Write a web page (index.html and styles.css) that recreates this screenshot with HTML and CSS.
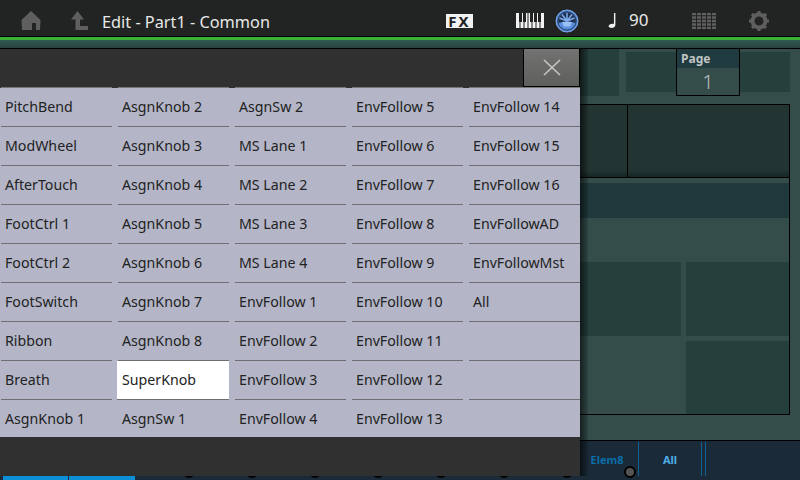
FILE: index.html
```html
<!DOCTYPE html>
<html lang="en">
<head>
    <meta charset="UTF-8">
    <title>Edit - Part1 - Common</title>
    <link rel="stylesheet" href="styles.css">
</head>
<body>
<div class="screen">
    <header class="topbar">
        <svg class="icon-home" width="20" height="20" viewBox="0 0 20 20"><path d="M10 0 L19.500 9 L19 19 L15 19 L15 12 L11 12 L11 19 L1 19 L0.500 9 Z" fill="#5e5f5e"/></svg>
        <svg class="icon-up" width="18" height="20" viewBox="0 0 18 20"><path d="M6.500 0 L13 8.500 L9 8.500 L9 15 L17 15 L17 19 L4.500 19 L4.500 8.500 L0 8.500 Z" fill="#5e5f5e"/></svg>
        <div class="title">Edit - Part1 - Common</div>
        <div class="fx">FX</div>
        <svg class="icon-keys" width="28" height="15" viewBox="0 0 28 15">
            <rect width="28" height="15" fill="#f2f2f2"/>
            <path d="M4 0V15M8 0V15M12 0V15M16 0V15M20 0V15M24 0V15" stroke="#222" stroke-width="1"/>
            <path d="M3 0H6V9H3ZM7 0H10V9H7ZM14 0H17V9H14ZM18 0H21V9H18ZM22 0H25V9H22Z" fill="#222"/>
        </svg>
        <svg class="icon-midi" width="24" height="24" viewBox="0 0 24 24">
            <circle cx="12" cy="12" r="11" fill="#5a8ede" stroke="#7aa6e8" stroke-width="1"/>
            <circle cx="12" cy="12" r="9.200" fill="none" stroke="#1f3353" stroke-width="1"/>
            <path d="M12 12 L3.500 14 A8.700 8.700 0 1 1 20.500 14 Z" fill="#1f3353"/>
            <path d="M12 12 L12 4 M12 12 L7 5.500 M12 12 L17 5.500 M12 12 L4.500 9 M12 12 L19.500 9" stroke="#7fabeb" stroke-width="1.500"/>
            <path d="M7 13 L17 13 L15 17.500 H9 Z" fill="#9cc0f3"/>
        </svg>
        <svg class="icon-note" width="8" height="15" viewBox="1 0 8 15.500"><path d="M7 0H8.500V12.500C8.500 14.500 6.500 15.500 4.500 15.500C2.500 15.500 1.500 14.500 1.500 13.500C1.500 12 3.500 11 5.500 11C6 11 6.500 11 7 11.300Z" fill="#f0f0f0"/></svg>
        <div class="tempo">90</div>
        <svg class="icon-grid" width="24" height="16" viewBox="0 0 24 16"><path d="M0 1H24M0 4.500H24M0 8H24M0 11.500H24M0 15H24" stroke="#5e5f5e" stroke-width="2.500"/><path d="M4.500 0V16M9.500 0V16M14.500 0V16M19.500 0V16" stroke="#222" stroke-width="1"/></svg>
        <svg class="icon-gear" width="20" height="20" viewBox="0 0 20 20"><circle cx="10" cy="10" r="6.500" fill="none" stroke="#5e5f5e" stroke-width="4"/><path d="M10 0V20M0 10H20M2.900 2.900L17.100 17.100M17.100 2.900L2.900 17.100" stroke="#5e5f5e" stroke-width="3" stroke-dasharray="3 14"/></svg>
    </header>
    <div class="accent"></div>

    <main class="workspace">
        <div class="tile-row">
            <div class="tile"></div>
            <div class="tile tile-inset"></div>
            <div class="page-box">
                <div class="page-label">Page</div>
                <div class="page-value">1</div>
            </div>
            <div class="tile tile-inset tile-end"></div>
        </div>
        <div class="frame">
            <div class="frame-top">
                <div class="frame-cell"></div>
                <div class="frame-cell frame-cell-wide"></div>
            </div>
            <div class="frame-body">
                <div class="band"></div>
                <div class="block-row">
                    <div class="block"></div>
                    <div class="block block-right"></div>
                </div>
                <div class="block-row block-row-low">
                    <div class="block block-empty"></div>
                    <div class="block block-right"></div>
                </div>
            </div>
        </div>
    </main>

    <footer class="tabbar">
        <div class="tab-active"></div>
        <div class="tab-active tab-active-b"></div>
        <div class="tab"><span class="knob"></span></div>
        <div class="tab"><span class="knob"></span></div>
        <div class="tab"><span class="knob"></span></div>
        <div class="tab"><span class="knob"></span></div>
        <div class="tab"><span class="knob"></span></div>
        <div class="tab"><span class="knob"></span></div>
        <div class="tab"><span class="knob"></span></div>
        <div class="tab tab-elem">Elem8<span class="knob"></span></div>
        <div class="tab tab-all">All</div>
        <div class="tab tab-end"></div>
    </footer>

    <section class="picker">
        <div class="picker-head">
            <button class="close-btn"><svg width="18" height="17" viewBox="0 0 18 17"><path d="M1 1L17 16M17 1L1 16" stroke="#c4c5c4" stroke-width="1.700"/></svg></button>
        </div>
        <div class="picker-grid">
            <div class="opt">PitchBend</div>
            <div class="opt">AsgnKnob 2</div>
            <div class="opt">AsgnSw 2</div>
            <div class="opt">EnvFollow 5</div>
            <div class="opt">EnvFollow 14</div>
            <div class="opt">ModWheel</div>
            <div class="opt">AsgnKnob 3</div>
            <div class="opt">MS Lane 1</div>
            <div class="opt">EnvFollow 6</div>
            <div class="opt">EnvFollow 15</div>
            <div class="opt">AfterTouch</div>
            <div class="opt">AsgnKnob 4</div>
            <div class="opt">MS Lane 2</div>
            <div class="opt">EnvFollow 7</div>
            <div class="opt">EnvFollow 16</div>
            <div class="opt">FootCtrl 1</div>
            <div class="opt">AsgnKnob 5</div>
            <div class="opt">MS Lane 3</div>
            <div class="opt">EnvFollow 8</div>
            <div class="opt">EnvFollowAD</div>
            <div class="opt">FootCtrl 2</div>
            <div class="opt">AsgnKnob 6</div>
            <div class="opt">MS Lane 4</div>
            <div class="opt">EnvFollow 9</div>
            <div class="opt">EnvFollowMst</div>
            <div class="opt">FootSwitch</div>
            <div class="opt">AsgnKnob 7</div>
            <div class="opt">EnvFollow 1</div>
            <div class="opt">EnvFollow 10</div>
            <div class="opt">All</div>
            <div class="opt">Ribbon</div>
            <div class="opt">AsgnKnob 8</div>
            <div class="opt">EnvFollow 2</div>
            <div class="opt">EnvFollow 11</div>
            <div class="opt"></div>
            <div class="opt">Breath</div>
            <div class="opt selected">SuperKnob</div>
            <div class="opt">EnvFollow 3</div>
            <div class="opt">EnvFollow 12</div>
            <div class="opt"></div>
            <div class="opt">AsgnKnob 1</div>
            <div class="opt">AsgnSw 1</div>
            <div class="opt">EnvFollow 4</div>
            <div class="opt">EnvFollow 13</div>
            <div class="opt"></div>
        </div>
        <div class="picker-foot"></div>
    </section>
</div>
</body>
</html>
```

FILE: styles.css
```css
body {
    margin: 0;
    padding: 0;
    font-family: "Noto Sans", sans-serif;
}
.screen {
    position: relative;
    width: 800px;
    height: 480px;
    overflow: hidden;
    display: flex;
    flex-direction: column;
    background-color: #344d4a;
}

/* top bar */
.topbar {
    height: 36px;
    flex: none;
    box-sizing: border-box;
    padding-top: 5px;
    display: flex;
    align-items: center;
    background-color: #222423;
    color: #e8e8e8;
}
.icon-home { margin-left: 21px; }
.icon-up { margin-left: 30px; }
.title {
    margin-left: 13px;
    padding-top: 3px;
    font-size: 16.3px;
    width: 344px;
    white-space: nowrap;
}
.fx {
    width: 27px;
    height: 14px;
    background-color: #f2f2f2;
    color: #222;
    font-size: 15px;
    font-weight: bold;
    letter-spacing: 2px;
    line-height: 14px;
    text-align: center;
}
.icon-keys { margin-left: 43px; }
.icon-midi { margin-left: 11px; }
.icon-note { margin-left: 29px; }
.tempo { margin-left: 13px; margin-bottom: 2px; font-size: 17px; width: 34px; }
.icon-grid { margin-left: 29px; }
.icon-gear { margin-left: 33px; }
.accent {
    height: 13px;
    flex: none;
    box-sizing: border-box;
    border-top: 1px solid #000;
    border-bottom: 1px solid #000;
    background: linear-gradient(#3cb034 0, #3cb034 3px, #2f5a4e 3px, #2a413e 100%);
}

/* teal page behind the picker */
.workspace {
    flex: 1;
    display: flex;
    flex-direction: column;
    padding-right: 10px;
}
.tile-row {
    display: flex;
    height: 55px;
    flex: none;
}
.tile {
    width: 619px;
    height: 47px;
    background-color: #253f3c;
}
.tile-inset {
    width: 50px;
    height: 40px;
    margin-top: 3px;
    margin-left: 7px;
}
.tile-end { margin-left: 0; flex: 1; }
.page-box {
    width: 64px;
    height: 47px;
    box-sizing: border-box;
    border: 1px solid #000;
    border-top: none;
    background-color: #344d4a;
}
.page-label {
    height: 19px;
    background-color: #1f3b40;
    color: #c0c4c4;
    font-size: 12px;
    font-weight: bold;
    line-height: 19px;
    padding-left: 4px;
}
.page-value {
    color: #b9bdbd;
    font-size: 20px;
    font-weight: 300;
    line-height: 27px;
    text-align: center;
}
.frame {
    height: 311px;
    flex: none;
    box-sizing: border-box;
    border: 1px solid #000;
    border-left: none;
    display: flex;
    flex-direction: column;
}
.frame-top {
    height: 72px;
    flex: none;
    display: flex;
    border-bottom: 1px solid #000;
}
.frame-cell {
    width: 628px;
    box-sizing: border-box;
    background: linear-gradient(#233533 90%, #182624 100%);
    border-right: 1px solid #000;
}
.frame-cell-wide { flex: 1; border-right: none; }
.frame-body { flex: 1; }
.band {
    height: 35px;
    margin-top: 5px;
    background-color: #20393d;
}
.block-row {
    display: flex;
    gap: 5px;
    margin-top: 44px;
    height: 74px;
}
.block-row-low { margin-top: 5px; height: 73px; }
.block { flex: 1; background-color: #253f3c; }
.block-right { flex: none; width: 103px; }
.block-empty { background-color: transparent; }

/* bottom tabs */
.tabbar {
    height: 40px;
    flex: none;
    box-sizing: border-box;
    border-top: 1px solid #000;
    display: flex;
    background-color: #1a2a38;
    font-size: 11px;
    font-weight: bold;
}
.tab-active {
    align-self: flex-end;
    width: 65px;
    height: 4px;
    margin-left: 3px;
    background-color: #0a8ed6;
}
.tab-active-b { width: 66px; margin-left: 1px; }
.tab {
    position: relative;
    width: 63px;
    height: 34px;
    margin-top: 1px;
    box-sizing: border-box;
    line-height: 36px;
    text-align: center;
    border-right: 1px solid #0f6496;
}
.tab-elem { color: #0a6ea8; }
.tab-all { color: #50b0e8; }
.tab-end { width: 4px; }
.knob {
    position: absolute;
    left: 48px;
    top: 24px;
    width: 12px;
    height: 12px;
    box-sizing: border-box;
    border: 2px solid #000;
    border-radius: 50%;
    background-color: #555;
}

/* modal picker */
.picker {
    position: absolute;
    left: 0;
    top: 49px;
    width: 580px;
    height: 427px;
    display: flex;
    flex-direction: column;
    background-color: #303030;
}
.picker::after {
    content: "";
    position: absolute;
    left: 100%;
    top: 0;
    width: 8px;
    height: 100%;
    background: linear-gradient(to right, rgba(0, 0, 0, 0.6), rgba(0, 0, 0, 0.12));
}
.picker-head {
    height: 38px;
    flex: none;
    display: flex;
    justify-content: flex-end;
}
.close-btn {
    width: 57px;
    height: 38px;
    padding: 0;
    box-sizing: border-box;
    border: 1px solid #000;
    border-top: none;
    background: linear-gradient(#727372, #5e605c);
    display: flex;
    align-items: center;
    justify-content: center;
}
.picker-grid {
    height: 350px;
    flex: none;
    box-sizing: border-box;
    padding-top: 1px;
    display: grid;
    grid-template-columns: 117px 117px 117px 117px 112px;
    grid-auto-rows: 39px;
    background: linear-gradient(#303030 1px, #b4b6c8 1px);
}
.opt {
    margin-right: 5px;
    margin-left: 1px;
    box-sizing: border-box;
    border-bottom: 1px solid #6e6e72;
    color: #222;
    font-size: 14.2px;
    line-height: 37px;
    padding-left: 4px;
    white-space: nowrap;
}
.opt:nth-child(-n+5) { box-shadow: 0 -1px 0 #77777a; }
.opt:nth-last-child(-n+5) { border-bottom: none; }
.opt:nth-child(5n) { margin-right: 0; }
.selected { background-color: #fff; margin-left: 0; padding-left: 5px; }
.picker-foot { flex: 1; }
```
